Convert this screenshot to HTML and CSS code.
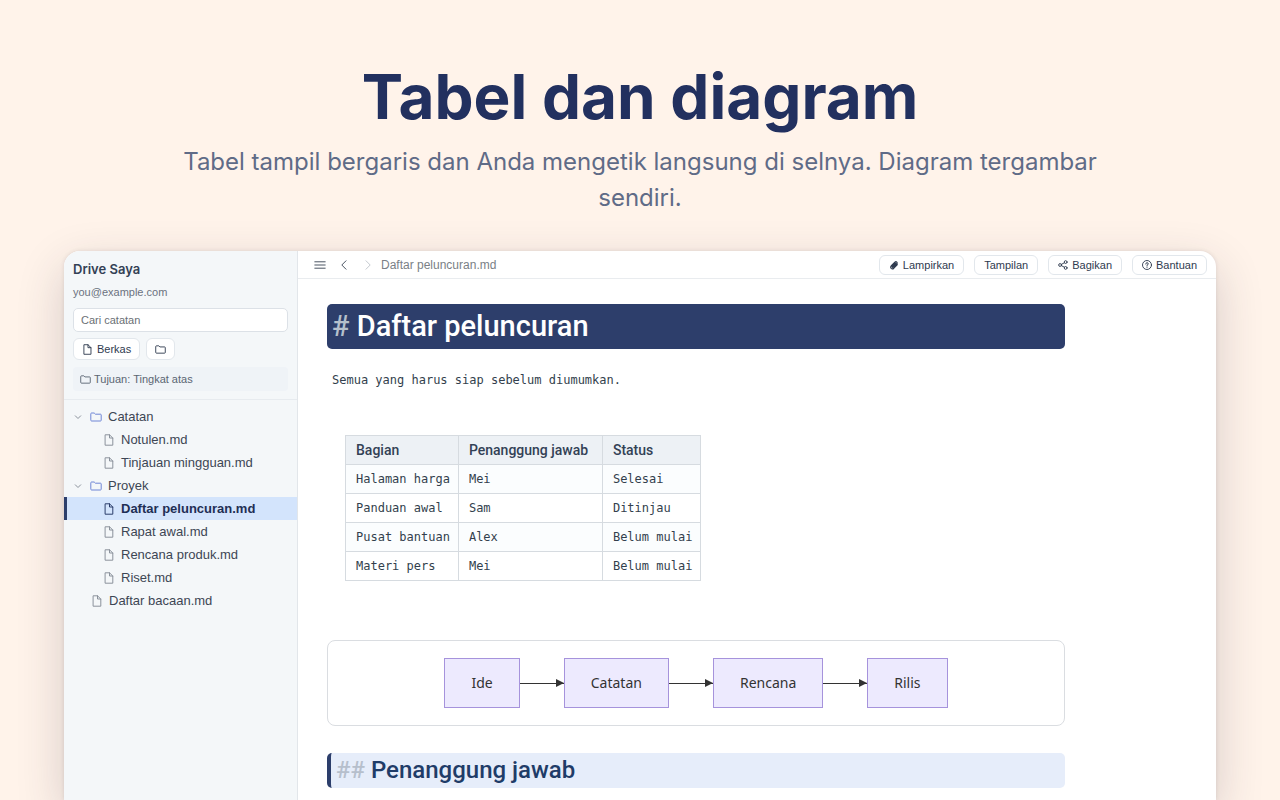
FILE: index.html
```html
<!DOCTYPE html>
<html lang="id">
<head>
<meta charset="utf-8">
<meta name="viewport" content="width=device-width, initial-scale=1">
<title>Tabel dan diagram</title>
<link rel="stylesheet" href="styles.css">
</head>
<body>
<svg class="sprite" aria-hidden="true">
  <symbol id="file" viewBox="0 0 12 12"><path d="M2.500 .8h4L9.800 4v7.200H2.500zM6.500 .8V4h3.300"/></symbol>
  <symbol id="folder" viewBox="0 0 12 12"><path d="M.8 2.700q0-.7.700-.7h2.700l1.200 1.200h5.100q.7 0 .7.700v5.400q0 .7-.7.700h-9q-.7 0-.7-.7z"/></symbol>
  <symbol id="down" viewBox="0 0 12 12"><path d="M3.300 4.800 6 7.500l2.700-2.700"/></symbol>
</svg>
<header class="hero">
  <h1 class="hero-title">Tabel dan diagram</h1>
  <p class="hero-text">Tabel tampil bergaris dan Anda mengetik langsung di selnya. Diagram tergambar sendiri.</p>
</header>
<div class="window">
  <aside class="sidebar">
    <div class="side-head">
      <h2 class="drive">Drive Saya</h2>
      <p class="account">you@example.com</p>
      <input class="search" type="search" placeholder="Cari catatan" aria-label="Cari catatan">
      <div class="actions">
        <button class="btn" type="button"><svg class="icon"><use href="#file"/></svg>Berkas</button>
        <button class="btn" type="button" aria-label="Folder baru"><svg class="icon"><use href="#folder"/></svg></button>
      </div>
      <p class="target"><svg class="icon"><use href="#folder"/></svg>Tujuan: Tingkat atas</p>
    </div>
    <nav class="tree">
      <a class="row" href="#"><svg class="icon chevron"><use href="#down"/></svg><svg class="icon blue"><use href="#folder"/></svg>Catatan</a>
      <a class="row child" href="#"><svg class="icon"><use href="#file"/></svg>Notulen.md</a>
      <a class="row child" href="#"><svg class="icon"><use href="#file"/></svg>Tinjauan mingguan.md</a>
      <a class="row" href="#"><svg class="icon chevron"><use href="#down"/></svg><svg class="icon blue"><use href="#folder"/></svg>Proyek</a>
      <a class="row child selected" href="#" aria-current="page"><svg class="icon"><use href="#file"/></svg>Daftar peluncuran.md</a>
      <a class="row child" href="#"><svg class="icon"><use href="#file"/></svg>Rapat awal.md</a>
      <a class="row child" href="#"><svg class="icon"><use href="#file"/></svg>Rencana produk.md</a>
      <a class="row child" href="#"><svg class="icon"><use href="#file"/></svg>Riset.md</a>
      <a class="row root" href="#"><svg class="icon"><use href="#file"/></svg>Daftar bacaan.md</a>
    </nav>
  </aside>
  <main class="main">
    <div class="topbar">
      <div class="tools">
        <button class="tool" type="button" aria-label="Menu"><svg class="icon" viewBox="0 0 12 12"><path d="M.8 2.800h10.400M.8 6h10.400M.8 9.200h10.400"/></svg></button>
        <button class="tool" type="button" aria-label="Kembali"><svg class="icon" viewBox="0 0 12 12"><path d="M8 1.800 3.800 6 8 10.200"/></svg></button>
        <button class="tool off" type="button" aria-label="Maju" disabled><svg class="icon" viewBox="0 0 12 12"><path d="M4 1.800 8.200 6 4 10.200"/></svg></button>
      </div>
      <span class="filename">Daftar peluncuran.md</span>
      <div class="topbar-actions">
        <button class="btn small" type="button"><svg class="icon bold" viewBox="0 0 12 12"><path d="m10 5.600-4.200 4.200q-1.700 1.500-3.100.2-1.300-1.500.2-3.100l4.200-4.300q1.200-1.100 2.200-.1 1 1.100-.1 2.200L5.300 8.500q-.6.500-1.100.1-.4-.6.100-1.100l3.600-3.600"/></svg>Lampirkan</button>
        <button class="btn small" type="button">Tampilan</button>
        <button class="btn small" type="button"><svg class="icon" viewBox="0 0 12 12"><circle cx="2.500" cy="6" r="1.700"/><circle cx="9.200" cy="2.500" r="1.700"/><circle cx="9.200" cy="9.500" r="1.700"/><path d="m4.100 5.200 3.500-1.800M4.100 6.800l3.500 1.800"/></svg>Bagikan</button>
        <button class="btn small" type="button"><svg class="icon" viewBox="0 0 12 12"><circle cx="6" cy="6" r="5.400"/><path d="M4.500 4.900q0-1.700 1.500-1.700t1.500 1.500Q7.500 5.600 6 6.300v.7M6 8.500v.4"/></svg>Bantuan</button>
      </div>
    </div>
    <article class="doc">
      <h1 class="doc-title"><span class="mark">#</span> Daftar peluncuran</h1>
      <p class="para">Semua yang harus siap sebelum diumumkan.</p>
      <table class="grid">
        <thead><tr><th>Bagian</th><th class="wide">Penanggung jawab</th><th>Status</th></tr></thead>
        <tbody>
          <tr><td>Halaman harga</td><td>Mei</td><td>Selesai</td></tr>
          <tr><td>Panduan awal</td><td>Sam</td><td>Ditinjau</td></tr>
          <tr><td>Pusat bantuan</td><td>Alex</td><td>Belum mulai</td></tr>
          <tr><td>Materi pers</td><td>Mei</td><td>Belum mulai</td></tr>
        </tbody>
      </table>
      <div class="diagram">
        <span class="node">Ide</span><span class="arrow"></span>
        <span class="node">Catatan</span><span class="arrow"></span>
        <span class="node">Rencana</span><span class="arrow"></span>
        <span class="node">Rilis</span>
      </div>
      <h2 class="doc-sub"><span class="mark">##</span> Penanggung jawab</h2>
    </article>
  </main>
</div>
</body>
</html>
```
FILE: styles.css
```css
* { box-sizing: border-box; }
body {
  margin: 0;
  height: 100vh;
  overflow: hidden;
  display: flex;
  flex-direction: column;
  background: #fff3ea;
  color: #334155;
  font-family: "Liberation Sans", Arial, sans-serif;
}
h1, h2, p { margin: 0; }
.sprite { display: none; }
.icon {
  width: 12px;
  height: 12px;
  flex: none;
  fill: none;
  stroke: currentColor;
  stroke-width: 1;
  stroke-linecap: round;
  stroke-linejoin: round;
}
.hero {
  padding: 60px 160px 35px;
  text-align: center;
  font-family: Inter, sans-serif;
}
.hero-title {
  color: #22305f;
  font-size: 62px;
  line-height: 74px;
  font-weight: 700;
}
.hero-text {
  margin-top: 10px;
  color: #5f6b87;
  font-size: 24px;
  line-height: 36px;
}
.window {
  flex: 1;
  display: flex;
  margin: 0 64px;
  border-radius: 16px 16px 0 0;
  overflow: hidden;
  background: #fff;
  box-shadow: 0 16px 48px rgba(50, 40, 60, .2), 0 0 4px rgba(50, 40, 60, .12);
}
.sidebar {
  width: 234px;
  flex: none;
  background: #f4f7f9;
  border-right: 1px solid #e2e6ea;
}
.side-head { padding: 9px 9px 8px; border-bottom: 1px solid #e7ebef; }
.drive { font: 600 13px/18px Inter, sans-serif; }
.account { margin-top: 6px; font-size: 11px; line-height: 16px; color: #6b7280; }
.search {
  display: block;
  width: 100%;
  height: 24px;
  margin-top: 8px;
  padding: 0 7px;
  border: 1px solid #dce1e7;
  border-radius: 5px;
  background: #fff;
  font: 11px "Liberation Sans", Arial, sans-serif;
}
.search::placeholder { color: #6b7075; opacity: 1; }
.actions { display: flex; gap: 6px; margin-top: 6px; }
.btn {
  display: flex;
  align-items: center;
  gap: 4px;
  height: 22px;
  padding: 0 8px;
  border: 1px solid #e2e7ec;
  border-radius: 6px;
  background: #fff;
  color: #2f3b4f;
  font: 11px "Liberation Sans", Arial, sans-serif;
}
.btn .icon { width: 11px; height: 11px; }
.btn.small { height: 20px; padding: 0 9px; }
.btn.small .icon { width: 10px; height: 10px; stroke-width: 1.1; }
.btn.small .icon.bold { stroke-width: 1.5; }
.target {
  display: flex;
  align-items: center;
  gap: 3px;
  height: 24px;
  margin-top: 7px;
  padding: 0 7px;
  border-radius: 4px;
  background: #eff3f7;
  color: #5b6673;
  font-size: 11px;
}
.target .icon { width: 11px; height: 11px; }
.tree { padding-top: 5px; }
.row {
  display: flex;
  align-items: center;
  gap: 6px;
  height: 23px;
  padding-left: 8px;
  color: #3d4654;
  font-size: 13px;
  text-decoration: none;
  white-space: nowrap;
}
.row .icon { color: #8b929c; }
.row .icon.blue { color: #6f86d6; }
.row.child { padding-left: 39px; }
.row.root { padding-left: 27px; }
.row.selected {
  border-left: 3px solid #2c3e6b;
  padding-left: 36px;
  background: #d3e4fc;
  color: #1f2f55;
  font-weight: 700;
}
.row.selected .icon { color: #2c3e6b; }
.main { flex: 1; min-width: 0; }
.topbar {
  display: flex;
  align-items: center;
  gap: 7px;
  height: 28px;
  padding: 0 9px 0 16px;
  border-bottom: 1px solid #e9ecef;
}
.tools { display: flex; gap: 12px; }
.tool { display: flex; padding: 0; border: 0; background: none; color: #4b5563; }
.tool.off { color: #c5cad0; }
.filename { color: #7a7f86; font-size: 12px; }
.topbar-actions { display: flex; gap: 10px; margin-left: auto; }
.doc { max-width: 767px; padding: 25px 0 24px 29px; }
.doc-title, .doc-sub {
  font-family: Roboto, sans-serif;
  font-weight: 500;
  border-radius: 5px;
}
.doc-title {
  padding: 0 5px;
  background: #2d3e6b;
  color: #fff;
  font-size: 29px;
  line-height: 45px;
}
.doc-title .mark { color: #b5c0cc; }
.para, .grid td {
  font-family: "DejaVu Sans Mono", monospace;
  font-size: 12px;
  color: #333f4d;
}
.para { margin: 20px 5px 0; line-height: 22px; }
.grid {
  margin: 44px 0 0 18px;
  border-collapse: collapse;
}
.grid th, .grid td {
  height: 29px;
  padding: 0 8px 0 10px;
  border: 1px solid #d6dbe0;
  text-align: left;
}
.grid th { background: #edf1f5; font: 500 14px Roboto, sans-serif; }
.grid .wide { width: 144px; }
.grid tbody tr:nth-child(odd) { background: #fbfdfe; }
.diagram {
  display: flex;
  justify-content: center;
  align-items: center;
  margin-top: 59px;
  padding: 17px;
  border: 1px solid #dadde1;
  border-radius: 8px;
}
.node {
  padding: 0 26px;
  border: 1px solid #a693dc;
  background: #edeafe;
  color: #333;
  font: 14px/48px "Noto Sans", sans-serif;
}
.arrow { position: relative; width: 44px; height: 1px; background: #333; }
.arrow::after {
  content: "";
  position: absolute;
  right: 0;
  top: -4px;
  border: solid transparent;
  border-width: 4px 0 4px 8px;
  border-left-color: #333;
}
.doc-sub {
  margin-top: 27px;
  padding: 0 5px;
  border-left: 4px solid #2c3e6b;
  background: #e6edfa;
  color: #1f3c68;
  font-size: 24px;
  line-height: 35px;
}
.doc-sub .mark { color: #b6bfcc; }
```
